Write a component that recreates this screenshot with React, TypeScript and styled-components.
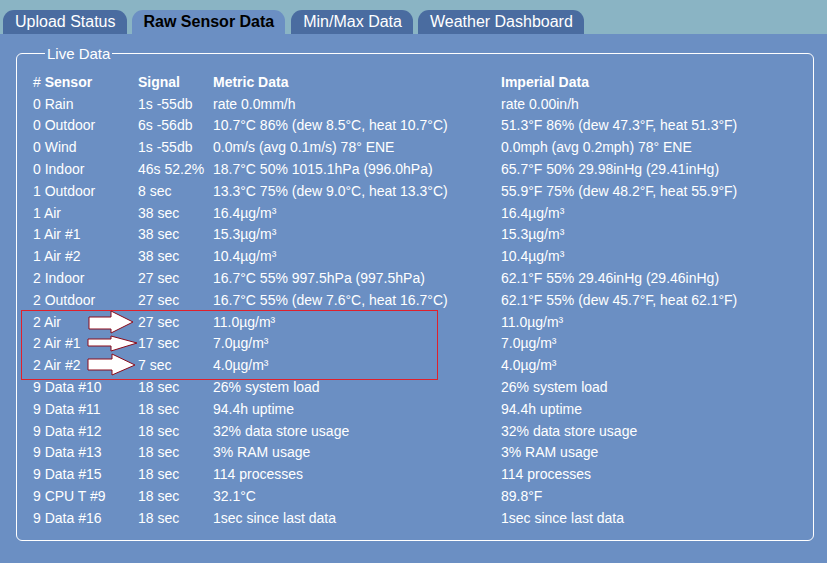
import styled, { createGlobalStyle } from "styled-components";

const GlobalStyle = createGlobalStyle`
  html, body {
    margin: 0;
    padding: 0;
    background: #6b8fc3;
    font-family: "Liberation Sans", Arial, sans-serif;
  }
`;

const tabs = ["Upload Status", "Raw Sensor Data", "Min/Max Data", "Weather Dashboard"];

type Row = [string, string, string, string];

const rows: Row[] = [
  ["0 Rain", "1s -55db", "rate 0.0mm/h", "rate 0.00in/h"],
  ["0 Outdoor", "6s -56db", "10.7°C 86% (dew 8.5°C, heat 10.7°C)", "51.3°F 86% (dew 47.3°F, heat 51.3°F)"],
  ["0 Wind", "1s -55db", "0.0m/s (avg 0.1m/s) 78° ENE", "0.0mph (avg 0.2mph) 78° ENE"],
  ["0 Indoor", "46s 52.2%", "18.7°C 50% 1015.1hPa (996.0hPa)", "65.7°F 50% 29.98inHg (29.41inHg)"],
  ["1 Outdoor", "8 sec", "13.3°C 75% (dew 9.0°C, heat 13.3°C)", "55.9°F 75% (dew 48.2°F, heat 55.9°F)"],
  ["1 Air", "38 sec", "16.4µg/m³", "16.4µg/m³"],
  ["1 Air #1", "38 sec", "15.3µg/m³", "15.3µg/m³"],
  ["1 Air #2", "38 sec", "10.4µg/m³", "10.4µg/m³"],
  ["2 Indoor", "27 sec", "16.7°C 55% 997.5hPa (997.5hPa)", "62.1°F 55% 29.46inHg (29.46inHg)"],
  ["2 Outdoor", "27 sec", "16.7°C 55% (dew 7.6°C, heat 16.7°C)", "62.1°F 55% (dew 45.7°F, heat 62.1°F)"],
  ["2 Air", "27 sec", "11.0µg/m³", "11.0µg/m³"],
  ["2 Air #1", "17 sec", "7.0µg/m³", "7.0µg/m³"],
  ["2 Air #2", "7 sec", "4.0µg/m³", "4.0µg/m³"],
  ["9 Data #10", "18 sec", "26% system load", "26% system load"],
  ["9 Data #11", "18 sec", "94.4h uptime", "94.4h uptime"],
  ["9 Data #12", "18 sec", "32% data store usage", "32% data store usage"],
  ["9 Data #13", "18 sec", "3% RAM usage", "3% RAM usage"],
  ["9 Data #15", "18 sec", "114 processes", "114 processes"],
  ["9 CPU T #9", "18 sec", "32.1°C", "89.8°F"],
  ["9 Data #16", "18 sec", "1sec since last data", "1sec since last data"],
];

const App = () => {
  return (
    <>
      <GlobalStyle />
      <TabStrip>
        {tabs.map((t, i) => (
          <Tab key={t} $active={i === 1}>
            {t}
          </Tab>
        ))}
      </TabStrip>
      <Panel>
        <LiveBox>
          <Legend>Live Data</Legend>
          <SensorTable>
            <colgroup>
              <col style={{ width: 105 }} />
              <col style={{ width: 75 }} />
              <col style={{ width: 288 }} />
              <col />
            </colgroup>
            <thead>
              <tr>
                <th>
                  <Hash>#</Hash> Sensor
                </th>
                <th>Signal</th>
                <th>Metric Data</th>
                <th>Imperial Data</th>
              </tr>
            </thead>
            <tbody>
              {rows.map((r) => (
                <tr key={r[0]}>
                  {r.map((c, j) => (
                    <td key={j}>{c}</td>
                  ))}
                </tr>
              ))}
            </tbody>
          </SensorTable>
          <Highlight />
          <Arrows width="54" height="70" viewBox="86 310 54 70">
            <polygon points="89,318 111,318 111,312 133,323 111,334 111,330 89,330" />
            <polygon points="88,340 111,340 111,337 137,344 111,352 111,347 88,347" />
            <polygon points="88,360 112,360 112,355 135,366 112,376 112,371 88,371" />
          </Arrows>
        </LiveBox>
      </Panel>
    </>
  );
};

const TabStrip = styled.div`
  height: 34px;
  background: #8ab4c4;
  display: flex;
  align-items: flex-end;
  gap: 5px;
  padding-left: 3px;
  box-sizing: border-box;
`;

const Tab = styled.div<{ $active?: boolean }>`
  height: 24px;
  line-height: 23px;
  padding: 0 11px 0 12px;
  border-radius: 11px 11px 0 0;
  font-size: 16px;
  background: ${(p) => (p.$active ? "#6b8fc3" : "#4a6ca0")};
  color: ${(p) => (p.$active ? "#000" : "#fff")};
  font-weight: ${(p) => (p.$active ? 700 : 400)};
  margin-right: ${(p) => (p.$active ? "1px" : "0")};
`;

const Panel = styled.div`
  background: #6b8fc3;
  min-height: 529px;
  padding: 11px 13px 0 16px;
  box-sizing: border-box;
`;

const LiveBox = styled.fieldset`
  position: relative;
  margin: 0;
  width: 798px;
  height: 496px;
  box-sizing: border-box;
  border: 1px solid #fff;
  border-radius: 6px;
  padding: 9px 16px 0 16px;
  color: #fff;
`;

const Legend = styled.legend`
  font-size: 15px;
  padding: 0 2px;
  margin-left: 12px;
  color: #fff;
`;

const SensorTable = styled.table`
  border-collapse: collapse;
  table-layout: fixed;
  width: 700px;
  font-size: 14px;
  color: #fff;
  th,
  td {
    padding: 0;
    height: 21.8px;
    text-align: left;
    white-space: nowrap;
    vertical-align: middle;
  }
  th {
    font-weight: 700;
  }
`;

const Hash = styled.span`
  font-weight: 400;
`;

const Highlight = styled.div`
  position: absolute;
  left: 4px;
  top: 248px;
  width: 417px;
  height: 70px;
  box-sizing: border-box;
  border: 1px solid #e0202a;
  pointer-events: none;
`;

const Arrows = styled.svg`
  position: absolute;
  left: 69px;
  top: 247px;
  polygon {
    fill: #fff;
    stroke: #8b0a1a;
    stroke-width: 1;
  }
`;

export default App;
